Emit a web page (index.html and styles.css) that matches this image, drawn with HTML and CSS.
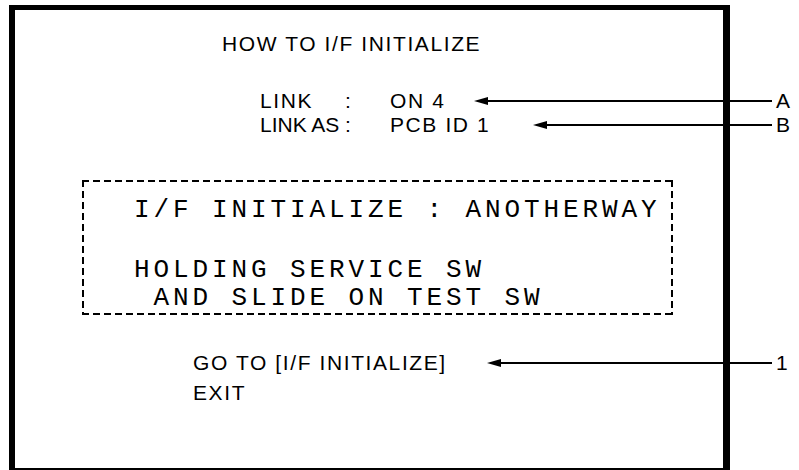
FILE: index.html
```html
<!DOCTYPE html>
<html lang="en">
<head>
    <meta charset="UTF-8">
    <title>HOW TO I/F INITIALIZE</title>

    <link rel="stylesheet" href="styles.css">

</head>
<body>
    <div class="screen">
        <h1 class="title">HOW TO I/F INITIALIZE</h1>

        <div class="status">
            <div class="row">
                <span class="key">LINK</span>
                <span class="sep">:</span>
                <span class="val">ON 4</span>
                <span class="arrow arrow-a"><i class="head"></i><i class="shaft"></i></span>
                <span class="tag">A</span>
            </div>
            <div class="row">
                <span class="key key-tight">LINK AS</span>
                <span class="sep">:</span>
                <span class="val">PCB ID 1</span>
                <span class="arrow arrow-b"><i class="head"></i><i class="shaft"></i></span>
                <span class="tag">B</span>
            </div>
        </div>

        <div class="notice">
            <p class="notice-head">I/F INITIALIZE : ANOTHERWAY</p>
            <p>HOLDING SERVICE SW</p>
            <p> AND SLIDE ON TEST SW</p>
        </div>

        <div class="menu">
            <div class="row">
                <span class="item">GO TO [I/F INITIALIZE]</span>
                <span class="arrow arrow-1"><i class="head"></i><i class="shaft"></i></span>
                <span class="tag">1</span>
            </div>
            <div class="row">
                <span class="item">EXIT</span>
            </div>
        </div>
    </div>
</body>
</html>
```

FILE: styles.css
```css
body {
    font-family: "Liberation Sans", Arial, sans-serif;
    margin: 0;
    padding: 5px 0 0 9px;
    background: #fff;
    color: #000;
    overflow: hidden;
}

.screen {
    box-sizing: border-box;
    width: 721px;
    height: 465px;
    border-style: solid;
    border-color: #000;
    border-width: 5px 7px 2px 6px;
    padding-top: 22px;
    font-size: 21px;
    line-height: 24px;
    letter-spacing: 1.6px;
}

.title {
    margin: 0 0 33px 207px;
    font-size: 21px;
    font-weight: normal;
    line-height: 24px;
}

.row {
    display: flex;
    align-items: center;
    margin-right: -70px;
}

.status {
    padding-left: 245px;
}

.key {
    width: 85px;
    white-space: nowrap;
}

.key-tight {
    letter-spacing: 0;
}

.sep {
    width: 45px;
}

/* callout arrow, drawn over the frame edge */
.arrow {
    flex: 1;
    display: flex;
    align-items: center;
}

.arrow .head {
    width: 0;
    height: 0;
    border-top: 4px solid transparent;
    border-bottom: 4px solid transparent;
    border-right: 14px solid #000;
}

.arrow .shaft {
    flex: 1;
    height: 2px;
    background: #000;
}

.arrow-a {
    margin-left: 29px;
}

.arrow-b {
    margin-left: 43px;
}

.arrow-1 {
    margin-left: 40px;
}

.tag {
    width: 17px;
    padding-left: 4px;
    letter-spacing: 0;
}

/* dashed frame: short dashes, small gaps */
.notice {
    box-sizing: border-box;
    width: 591px;
    margin: 43px 0 0 67px;
    padding: 16px 0 3px 52px;
    background:
        repeating-linear-gradient(90deg, #000 0 7px, transparent 7px 11px) left top / 100% 2px no-repeat,
        repeating-linear-gradient(90deg, #000 0 7px, transparent 7px 11px) left bottom / 100% 2px no-repeat,
        repeating-linear-gradient(180deg, #000 0 7px, transparent 7px 11px) left top / 2px 100% no-repeat,
        repeating-linear-gradient(180deg, #000 0 7px, transparent 7px 11px) right top / 2px 100% no-repeat;
    font-family: "Liberation Mono", "DejaVu Sans Mono", monospace;
    font-size: 26px;
    line-height: 28px;
    letter-spacing: 3.9px;
}

.notice p {
    margin: 0;
    white-space: pre;
}

.notice .notice-head {
    margin-bottom: 32px;
}

.menu {
    margin-top: 33px;
    padding-left: 178px;
    line-height: 30px;
}
```
